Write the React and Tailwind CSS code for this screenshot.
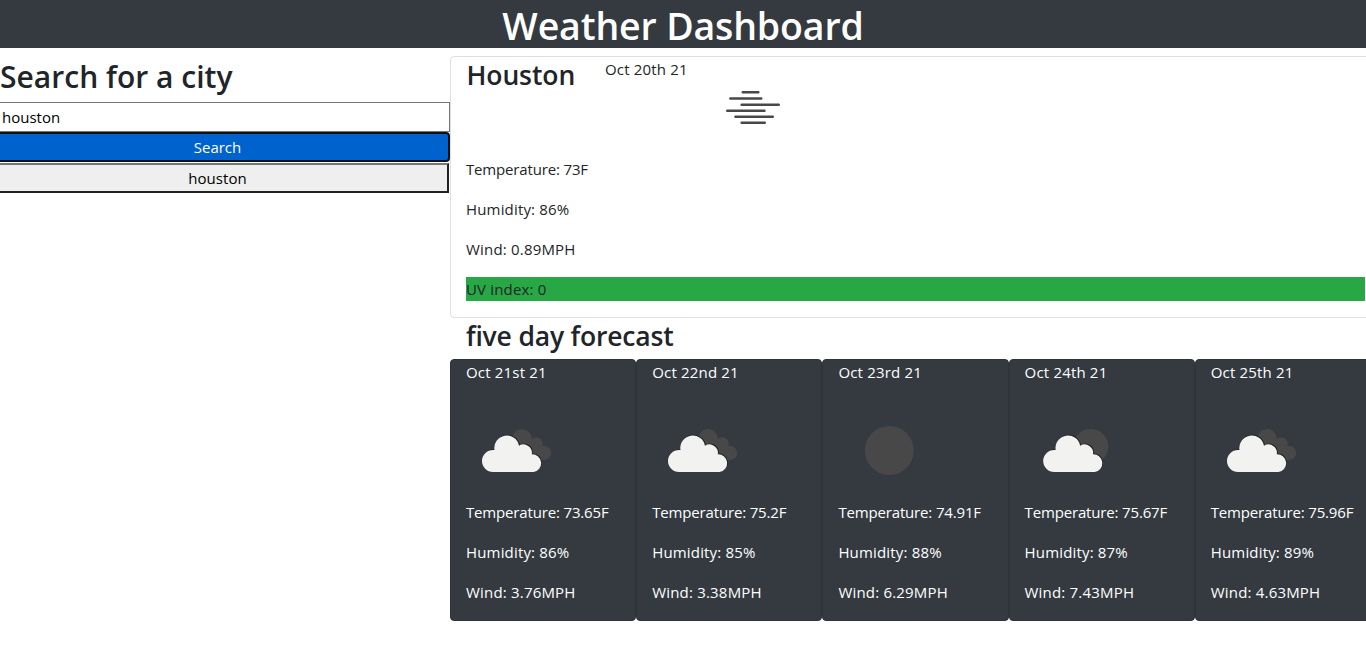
import React from "react";

const days = [
  { date: "Oct 21st 21", icon: "broken", temp: "73.65", humidity: 86, wind: "3.76" },
  { date: "Oct 22nd 21", icon: "broken", temp: "75.2", humidity: 85, wind: "3.38" },
  { date: "Oct 23rd 21", icon: "clear", temp: "74.91", humidity: 88, wind: "6.29" },
  { date: "Oct 24th 21", icon: "few", temp: "75.67", humidity: 87, wind: "7.43" },
  { date: "Oct 25th 21", icon: "broken", temp: "75.96", humidity: 89, wind: "4.63" },
];

const FRONT_CLOUD =
  "M27 72 A10.9 10.9 0 0 1 27 50 H28.5 A12.4 12.4 0 0 1 53 45.8 A8.4 8.4 0 0 1 65.8 54.3 A8.9 8.9 0 0 1 67.5 72 Z";

function Cloud({ x = 0 }) {
  return (
    <g transform={`translate(${x} 0)`}>
      <path d={FRONT_CLOUD} transform="translate(0.8 -0.8)" fill="#212326" />
      <path d={FRONT_CLOUD} fill="#f2f2f0" />
    </g>
  );
}

function WeatherIcon({ type }) {
  return (
    <svg width="100" height="100" viewBox="0 0 100 100" className="block">
      {type === "mist" && (
        <g stroke="#484848" strokeWidth="2.4" strokeLinecap="round">
          <path d="M39.7 35.3H55.4M27.3 41.5H58.3M38.6 47.7H75.8M24.2 53.7H61.5M32.4 59.7H69.8M38.6 65.7H61.8" />
        </g>
      )}
      {type === "clear" && <circle cx="51.3" cy="50.5" r="24.5" fill="#484848" />}
      {type === "few" && (
        <>
          <circle cx="65.7" cy="46.5" r="17.5" fill="#484848" />
          <Cloud x={2.2} />
        </>
      )}
      {type === "broken" && (
        <>
          <g fill="#484848">
            <circle cx="56" cy="39" r="10" />
            <circle cx="70.2" cy="43.8" r="6.6" />
            <circle cx="78" cy="53" r="7.2" />
            <path d="M50 42L66 40L76.5 49L78 60H60Z" />
          </g>
          <Cloud />
        </>
      )}
    </svg>
  );
}

function DayCard({ day }) {
  return (
    <div className="flex h-[262px] w-[186.2px] shrink-0 flex-col rounded border border-[#2f333a] bg-[#343a40] px-[15px] text-white">
      <p className="h-6 tracking-[0.18px]">{day.date}</p>
      <div className="mt-4">
        <WeatherIcon type={day.icon} />
      </div>
      <p className="mb-4 tracking-[-0.16px] whitespace-nowrap">Temperature: {day.temp}F</p>
      <p className="mb-4 tracking-[0.17px]">Humidity: {day.humidity}%</p>
      <p className="tracking-[0.19px]">Wind: {day.wind}MPH</p>
    </div>
  );
}

export default function App() {
  return (
    <div className="h-[657px] w-full overflow-hidden bg-white font-['Open_Sans',sans-serif] text-[15px] leading-6 text-[#212529]">
      <header className="flex h-12 justify-center bg-[#343a40]">
        <h1 className="pt-[2px] text-[37.5px] leading-12 font-semibold tracking-[-0.15px] text-white">Weather Dashboard</h1>
      </header>
      <main className="flex pt-2">
        <section className="-ml-[15px] flex w-[465px] shrink-0 flex-col">
          <h2 className="mb-[8px] h-[38px] pt-[2px] pl-[15px] text-[30px] leading-[38px] font-semibold tracking-[0.02px]">Search for a city</h2>
          <input
            defaultValue="houston"
            className="h-[30px] w-full border border-[#767676] pr-[2px] pl-[16px] text-black outline-none"
          />
          <button className="h-[30px] w-full rounded border-2 border-[#101010] bg-[#0062cc] leading-[26px] text-white">Search</button>
          <button className="mt-px h-[30px] w-[464px] border-2 border-t-[#767676] border-r-[#212121] border-b-[#212121] border-l-[#767676] bg-[#efefef] pl-[1px] leading-[26px] tracking-[0.08px] text-black">
            houston
          </button>
        </section>
        <section className="w-[931px] shrink-0">
          <div className="h-[262px] rounded border border-[#dfdfdf] px-[15px]">
            <div className="flex h-[100px]">
              <h3 className="w-[139px] pt-px pl-[0.5px] text-[26.5px] leading-[34px] font-semibold tracking-[-0.1px]">Houston</h3>
              <p className="w-[98px] tracking-[0.18px]">Oct 20th 21</p>
              <WeatherIcon type="mist" />
            </div>
            <p className="mb-4 tracking-[-0.16px]">Temperature: 73F</p>
            <p className="mb-4 tracking-[0.17px]">Humidity: 86%</p>
            <p className="mb-4 tracking-[0.19px]">Wind: 0.89MPH</p>
            <p className="bg-[#28a745] tracking-[0.17px]">UV index: 0</p>
          </div>
          <h3 className="h-[41px] pt-px pl-4 text-[26.5px] leading-[34px] font-semibold tracking-[-0.18px]">five day forecast</h3>
          <div className="flex">
            {days.map((day) => (
              <DayCard key={day.date} day={day} />
            ))}
          </div>
        </section>
      </main>
    </div>
  );
}
